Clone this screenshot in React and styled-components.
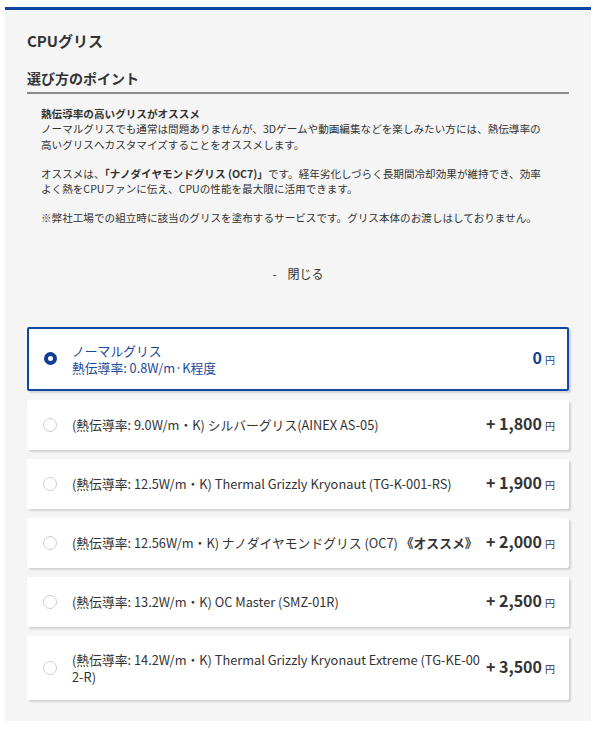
import React from "react";
import styled, { createGlobalStyle } from "styled-components";

const GlobalStyle = createGlobalStyle`
  body {
    margin: 0;
    background: #ffffff;
    font-family: "Noto Sans CJK JP", "Noto Sans", sans-serif;
    color: #333333;
  }
`;

const Panel = styled.section`
  margin: 7px 9px 0 5px;
  border-top: 3px solid #0d45a0;
  background: #f5f5f5;
  padding: 20px 22px 21px 22px;
`;

const Title = styled.h2`
  margin: 0;
  font-size: 15px;
  line-height: 22px;
  font-weight: 700;
  color: #333;
`;

const SubTitle = styled.h3`
  margin: 16px 0 0;
  padding-bottom: 4px;
  font-size: 14px;
  line-height: 20px;
  font-weight: 700;
  border-bottom: 2px solid #8a8a8a;
`;

const Body = styled.div`
  padding: 12px 22px 0 14px;
  font-size: 10.6px;
  line-height: 15.3px;
  color: #333;

  p {
    margin: 0 0 14px;
  }

  strong {
    font-weight: 700;
  }
`;

const CloseToggle = styled.button`
  display: flex;
  justify-content: center;
  gap: 11px;
  width: 100%;
  margin-top: 39px;
  padding: 0;
  border: none;
  background: none;
  font-family: inherit;
  font-size: 12px;
  line-height: 18px;
  color: #333;
  cursor: pointer;
`;

const OptionList = styled.div`
  display: flex;
  flex-direction: column;
  gap: 9px;
  margin-top: 44px;
`;

const Card = styled.label`
  display: flex;
  align-items: center;
  min-height: 50px;
  box-sizing: border-box;
  padding: 13px 12px 13px 15px;
  background: #ffffff;
  border: 2px solid ${(p) => (p.$selected ? "#0f47a1" : "transparent")};
  border-radius: 2px;
  box-shadow: 2px 2px 2px rgba(0, 0, 0, 0.14);
  cursor: pointer;
  color: ${(p) => (p.$selected ? "#1b4a9a" : "#333")};
`;

const Radio = styled.span`
  flex: none;
  width: ${(p) => (p.$checked ? "13px" : "14px")};
  height: ${(p) => (p.$checked ? "13px" : "14px")};
  box-sizing: border-box;
  border-radius: 50%;
  border: ${(p) => (p.$checked ? "4px solid #0f3f92" : "1px solid #cfcfcf")};
  background: #fff;
  margin-left: ${(p) => (p.$checked ? "0" : "-1px")};
`;

const Label = styled.div`
  flex: 1;
  margin-left: 15px;
  margin-right: 4px;
  font-size: 12.8px;
  line-height: 17px;
  word-break: break-all;

  strong {
    font-weight: 700;
  }
`;

const Price = styled.div`
  flex: none;
  display: flex;
  align-items: baseline;
  font-size: 16px;
  line-height: 17px;
  font-weight: 700;
  color: ${(p) => (p.$selected ? "#0f3f92" : "#333")};

  small {
    margin-left: 3px;
    font-size: 10px;
    font-weight: 400;
  }
`;

const options = [
  {
    id: "normal",
    lines: ["ノーマルグリス", "熱伝導率: 0.8W/m·K程度"],
    price: "0",
  },
  {
    id: "silver",
    text: "(熱伝導率: 9.0W/m・K) シルバーグリス(AINEX AS-05)",
    price: "+ 1,800",
  },
  {
    id: "kryonaut",
    text: "(熱伝導率: 12.5W/m・K) Thermal Grizzly Kryonaut (TG-K-001-RS)",
    price: "+ 1,900",
  },
  {
    id: "oc7",
    text: "(熱伝導率: 12.56W/m・K) ナノダイヤモンドグリス (OC7) ",
    extra: "《オススメ》",
    price: "+ 2,000",
  },
  {
    id: "ocmaster",
    text: "(熱伝導率: 13.2W/m・K) OC Master (SMZ-01R)",
    price: "+ 2,500",
  },
  {
    id: "extreme",
    text: "(熱伝導率: 14.2W/m・K) Thermal Grizzly Kryonaut Extreme (TG-KE-002-R)",
    price: "+ 3,500",
  },
];

export default function App() {
  const [selected, setSelected] = React.useState("normal");

  return (
    <>
      <GlobalStyle />
      <Panel>
        <Title>CPUグリス</Title>
        <SubTitle>選び方のポイント</SubTitle>
        <Body>
          <p>
            <strong>熱伝導率の高いグリスがオススメ</strong>
            <br />
            ノーマルグリスでも通常は問題ありませんが、3Dゲームや動画編集などを楽しみたい方には、熱伝導率の高いグリスへカスタマイズすることをオススメします。
          </p>
          <p>
            オススメは、<strong>「ナノダイヤモンドグリス (OC7)」</strong>です。経年劣化しづらく長期間冷却効果が維持でき、効率よく熱をCPUファンに伝え、CPUの性能を最大限に活用できます。
          </p>
          <p>
            ※弊社工場での組立時に該当のグリスを塗布するサービスです。グリス本体のお渡しはしておりません。
          </p>
        </Body>
        <CloseToggle type="button">
          <span>-</span>
          <span>閉じる</span>
        </CloseToggle>
        <OptionList>
          {options.map((o) => {
            const on = selected === o.id;
            return (
              <Card key={o.id} $selected={on} onClick={() => setSelected(o.id)}>
                <Radio $checked={on} />
                <Label>
                  {o.lines ? (
                    o.lines.map((l) => <div key={l}>{l}</div>)
                  ) : (
                    <>
                      {o.text}
                      {o.extra && <strong>{o.extra}</strong>}
                    </>
                  )}
                </Label>
                <Price $selected={on}>
                  {o.price}
                  <small>円</small>
                </Price>
              </Card>
            );
          })}
        </OptionList>
      </Panel>
    </>
  );
}
